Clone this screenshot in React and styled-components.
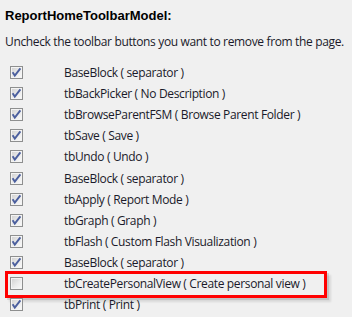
import React from "react";
import styled, { createGlobalStyle } from "styled-components";

const Global = createGlobalStyle`
  html, body { margin: 0; padding: 0; background: #f0f0f0; }
  body { font-family: "Open Sans", "Liberation Sans", sans-serif; }
`;

const Page = styled.div`
  width: 352px;
  height: 317px;
  overflow: hidden;
  background: #f0f0f0;
  padding: 8px 0 0 5px;
  box-sizing: border-box;
`;

const Title = styled.h2`
  margin: 0;
  font-family: "Liberation Sans", Arial, sans-serif;
  font-weight: bold;
  font-size: 13px;
  line-height: 16px;
  color: #000;
`;

const Subtitle = styled.p`
  margin: 10px 0 0;
  font-size: 12px;
  line-height: 16px;
  color: #1a1a2a;
  letter-spacing: -0.35px;
`;

const List = styled.ul`
  list-style: none;
  margin: 12px 0 0;
  padding: 0;
`;

const Row = styled.li`
  position: relative;
  display: flex;
  align-items: center;
  height: 21.1px;
  padding-left: 5px;
  font-size: 12px;
  color: #1a1a2a;
  letter-spacing: -0.35px;
  ${(p) =>
    p.$highlighted &&
    `
    &::after {
      content: "";
      position: absolute;
      left: 0;
      top: -2px;
      width: 322px;
      height: 27px;
      box-sizing: border-box;
      border: 3px solid #ff0000;
      box-shadow: 2px 2px 0 rgba(0,0,0,0.10), 4px 4px 2px rgba(0,0,0,0.10);
      pointer-events: none;
    }
  `}
`;

const Box = styled.span`
  flex: none;
  width: 13px;
  height: 13px;
  box-sizing: border-box;
  border: 1px solid #8e8f8f;
  background: linear-gradient(135deg, #cfcfcf 0%, #ebebeb 55%, #fbfbfb 100%);
  box-shadow: inset 0 0 0 1px #f4f4f4;
  display: flex;
  align-items: center;
  justify-content: center;
`;

const Label = styled.span`
  margin-left: 41px;
  white-space: nowrap;
`;

const Check = () => (
  <svg width="11" height="11" viewBox="0 0 11 11">
    <path d="M1.6 5.2 L3.8 8.6 L9.4 1.4" fill="none" stroke="#4b5f9e" strokeWidth="1.9" strokeLinejoin="miter" />
  </svg>
);

const items = [
  ["BaseBlock", "separator", true],
  ["tbBackPicker", "No Description", true],
  ["tbBrowseParentFSM", "Browse Parent Folder", true],
  ["tbSave", "Save", true],
  ["tbUndo", "Undo", true],
  ["BaseBlock", "separator", true],
  ["tbApply", "Report Mode", true],
  ["tbGraph", "Graph", true],
  ["tbFlash", "Custom Flash Visualization", true],
  ["BaseBlock", "separator", true],
  ["tbCreatePersonalView", "Create personal view", false],
  ["tbPrint", "Print", true],
];

export default function App() {
  return (
    <Page>
      <Global />
      <Title>ReportHomeToolbarModel:</Title>
      <Subtitle>Uncheck the toolbar buttons you want to remove from the page.</Subtitle>
      <List>
        {items.map(([name, desc, checked], i) => (
          <Row key={i} $highlighted={!checked}>
            <Box>{checked && <Check />}</Box>
            <Label>{`${name} ( ${desc} )`}</Label>
          </Row>
        ))}
      </List>
    </Page>
  );
}
